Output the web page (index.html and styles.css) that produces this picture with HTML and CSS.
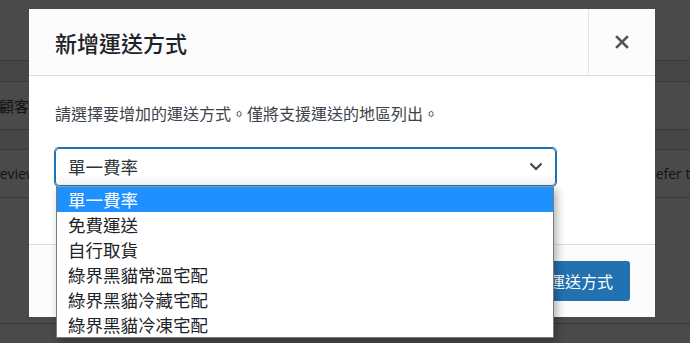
FILE: index.html
```html
<!DOCTYPE html>
<html lang="zh-Hant">
<head>
    <meta charset="UTF-8">
    <meta name="viewport" content="width=device-width, initial-scale=1.0">
    <title>新增運送方式</title>
    <link rel="stylesheet" href="styles.css">
</head>
<body>
    <!-- Halaman di belakang modal -->
    <div class="page">
        <div class="page-top"></div>
        <div class="band"></div>
        <div class="row">
            <span class="cell-label">顧客</span>
            <span class="cell-note"></span>
        </div>
        <div class="band band-short"></div>
        <div class="row">
            <span class="cell-label cell-shift">Reviews</span>
            <span class="cell-note">Refer to the guide</span>
        </div>
        <div class="page-rest"></div>
    </div>

    <div class="overlay"></div>

    <!-- Modal -->
    <div class="modal">
        <header class="modal-header">
            <h1>新增運送方式</h1>
            <button class="modal-close" type="button" aria-label="關閉">
                <svg width="14" height="14" viewBox="0 0 14 14">
                    <path d="M2 2 L12 12 M12 2 L2 12" stroke="#50575e" stroke-width="2.6" stroke-linecap="square"/>
                </svg>
            </button>
        </header>
        <div class="modal-body">
            <p>請選擇要增加的運送方式。僅將支援運送的地區列出。</p>
            <div class="select">
                <span class="select-value">單一費率</span>
                <svg class="select-arrow" width="14" height="9" viewBox="0 0 14 9">
                    <path d="M1.5 1.5 L7 7 L12.5 1.5" fill="none" stroke="#3c434a" stroke-width="2"/>
                </svg>
                <ul class="select-list">
                    <li class="selected">單一費率</li>
                    <li>免費運送</li>
                    <li>自行取貨</li>
                    <li>綠界黑貓常溫宅配</li>
                    <li>綠界黑貓冷藏宅配</li>
                    <li>綠界黑貓冷凍宅配</li>
                </ul>
            </div>
        </div>
        <footer class="modal-footer">
            <button class="button-primary" type="button">新增運送方式</button>
        </footer>
    </div>
</body>
</html>
```

FILE: styles.css
```css
body {
    margin: 0;
    font-family: "Open Sans", "Noto Sans CJK TC", sans-serif;
    background-color: #fff;
    color: #3c434a;
    overflow: hidden;
    height: 343px;
}
.page-top {
    height: 60px;
    border-bottom: 1px solid #c3c4c7;
}
.band {
    height: 20px;
    background-color: #f0f0f1;
    border-bottom: 1px solid #c3c4c7;
}
.band-short {
    height: 19px;
}
.row {
    height: 47px;
    display: grid;
    grid-template-columns: 647px 1fr;
    align-items: center;
    border-bottom: 1px solid #c3c4c7;
    font-size: 14px;
    white-space: nowrap;
}
.cell-label {
    margin-left: -1px;
    font-size: 15px;
    font-family: "Noto Sans CJK TC", sans-serif;
}
.cell-shift {
    margin-left: -9px;
    font-size: 14px;
    font-family: "Open Sans", sans-serif;
}
.page-rest {
    height: 125px;
    border-bottom: 1px solid #c3c4c7;
}
.overlay {
    position: absolute;
    top: 0;
    left: 0;
    right: 0;
    bottom: 0;
    background-color: rgba(0, 0, 0, 0.71);
}
.modal {
    position: absolute;
    top: 9px;
    left: 29px;
    width: 626px;
    height: 308px;
    background-color: #fff;
    display: flex;
    flex-direction: column;
    font-family: "Noto Sans CJK TC", sans-serif;
}
.modal-header {
    height: 66px;
    display: flex;
    align-items: center;
    background-color: #fcfcfc;
    border-bottom: 1px solid #dcdcde;
}
.modal-header h1 {
    flex: 1;
    margin: 0;
    padding-left: 26px;
    font-size: 22px;
    font-weight: 500;
    line-height: 30px;
    color: #1d2327;
}
.modal-close {
    width: 67px;
    height: 66px;
    border: none;
    border-left: 1px solid #e5e5e5;
    background: none;
    padding: 0;
    display: flex;
    align-items: center;
    justify-content: center;
}
.modal-body {
    flex: 1;
    padding: 26px 26px 0;
}
.modal-body p {
    margin: 0 0 24px;
    font-size: 16px;
    line-height: 22px;
    color: #3c434a;
}
.select {
    position: relative;
    box-sizing: border-box;
    width: 501px;
    height: 38px;
    border: 1px solid #2271b1;
    border-radius: 4px;
    box-shadow: 0 0 0 1px #2271b1;
    background: linear-gradient(#fff 70%, #f3f3f3);
    display: flex;
    align-items: center;
    justify-content: space-between;
    padding: 0 12px 0 12px;
}
.select-value {
    font-size: 17.5px;
    color: #2c3338;
    line-height: 24px;
}
.select-arrow {
    margin-top: -2px;
}
.select-list {
    position: absolute;
    top: calc(100% + 1px);
    left: 0;
    width: 498px;
    box-sizing: border-box;
    margin: 0;
    padding: 0;
    list-style: none;
    background-color: #fff;
    border: 1px solid #7a7a7a;
    border-top-color: #9a9a9a;
    box-shadow: 3px 4px 8px rgba(0, 0, 0, 0.3);
}
.select-list li {
    height: 25px;
    line-height: 25px;
    padding-left: 11px;
    font-size: 17.5px;
    color: #1d2327;
}
.select-list li.selected {
    background-color: #1e90ff;
    color: #fff;
}
.modal-footer {
    height: 73px;
    box-sizing: border-box;
    border-top: 1px solid #dcdcde;
    background-color: #fcfcfc;
    display: flex;
    justify-content: flex-end;
    padding: 16px 25px 0 0;
}
.button-primary {
    height: 40px;
    padding: 0 17px;
    border: none;
    border-radius: 3px;
    background-color: #2271b1;
    color: #fff;
    font-family: "Noto Sans CJK TC", sans-serif;
    font-size: 16px;
}
```
